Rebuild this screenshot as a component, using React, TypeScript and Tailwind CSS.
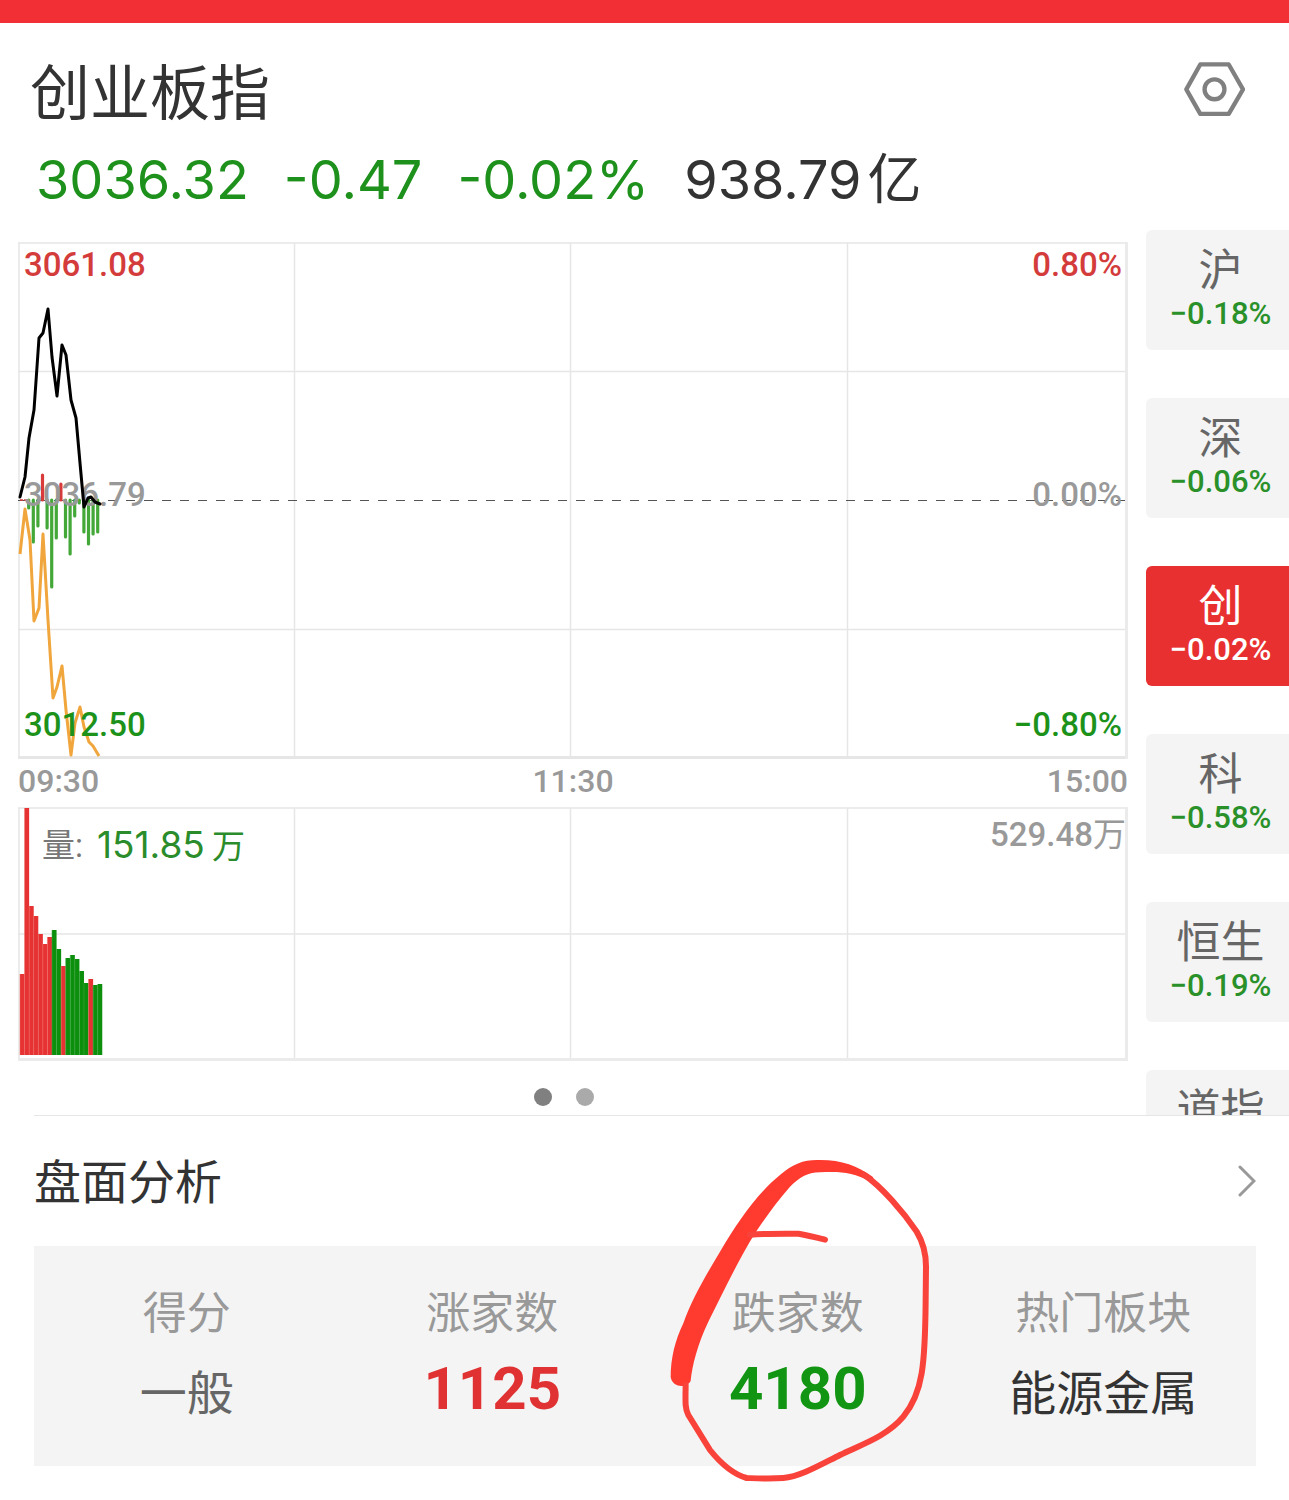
import { useState } from "react";

interface IndexItem {
  name: string;
  change?: string;
}

const indexes: IndexItem[] = [
  { name: "沪", change: "−0.18%" },
  { name: "深", change: "−0.06%" },
  { name: "创", change: "−0.02%" },
  { name: "科", change: "−0.58%" },
  { name: "恒生", change: "−0.19%" },
  { name: "道指" },
];

const stats = [
  { label: "得分", value: "一般", type: "text", color: "text-[#666666]" },
  { label: "涨家数", value: "1125", type: "number", color: "text-[#e03232]" },
  { label: "跌家数", value: "4180", type: "number", color: "text-[#129512]", marked: true },
  { label: "热门板块", value: "能源金属", type: "text", color: "text-[#333333]" },
];

const pricePoints =
  "2,256 7,236 11,197 16,169 21,97 25,92 30,68 34,116 39,155 44,104 48,114 53,159 58,177 62,222 66,266 70,257 73,256 77,261 82,263";

const averagePoints =
  "2,313 7,268 12,299 16,380 21,367 25,293 30,379 35,457 39,446 44,425 48,469 53,514 57,482 62,466 66,486 71,501 75,505 81,515";

// signed length of each minute's bar around the zero line
const momentum = [-8, -42, -26, 25, -28, -87, -38, 16, -37, -54, -16, -3, -32, -44, -34, -32];

const volumes = [
  { h: 81, up: true },
  { h: 247, up: true },
  { h: 149, up: true },
  { h: 139, up: true },
  { h: 121, up: true },
  { h: 111, up: true },
  { h: 118, up: true },
  { h: 125, up: false },
  { h: 106, up: false },
  { h: 89, up: true },
  { h: 97, up: false },
  { h: 100, up: false },
  { h: 96, up: false },
  { h: 84, up: false },
  { h: 72, up: false },
  { h: 76, up: true },
  { h: 70, up: false },
  { h: 71, up: false },
];

const chartFont = "font-['Roboto','Noto_Sans_CJK_SC',sans-serif]";

function PriceChart() {
  return (
    <svg viewBox="0 0 1110 518" className={`block h-auto w-full ${chartFont}`} role="img" aria-label="分时图">
      <g stroke="#e6e6e6" fill="none">
        <path d="M0 2H1110M1 2V517M276.500 2V516M552.500 2V516M829.500 2V516M0 130.500H1108M0 388.500H1108" strokeWidth="1.500" />
        <path d="M0 516.500H1110" strokeWidth="3" />
        <path d="M1108.500 2V518" strokeWidth="3" stroke="#ebebeb" />
      </g>
      <path d="M0 259.500H1108" stroke="#555" strokeWidth="1" strokeDasharray="9 9" />
      <path d="M2 259H9" stroke="#d93a3a" strokeWidth="1.500" strokeDasharray="3 1" />
      {momentum.map((v, i) => (
        <line
          key={i}
          x1={10.7 + i * 4.6}
          x2={10.7 + i * 4.6}
          y1={259}
          y2={259 - v}
          stroke={v > 0 ? "#d93a3a" : "#43a838"}
          strokeWidth="3.200"
          strokeLinecap="round"
        />
      ))}
      <polyline points={averagePoints} fill="none" stroke="#f0a63c" strokeWidth="3" strokeLinejoin="round" />
      <g fontSize="33" fontWeight="500">
        <text x="6" y="35" fill="#d43c3c">3061.08</text>
        <text x="6" y="265" fill="#999">3036.79</text>
        <text x="6" y="495" fill="#1d921b">3012.50</text>
        <g textAnchor="end">
          <text x="1104" y="35" fill="#d43c3c">0.80%</text>
          <text x="1104" y="265" fill="#999">0.00%</text>
          <text x="1104" y="495" fill="#1d921b">−0.80%</text>
        </g>
      </g>
      <polyline points={pricePoints} fill="none" stroke="#000" strokeWidth="3" strokeLinejoin="round" strokeLinecap="round" />
    </svg>
  );
}

function VolumeChart() {
  return (
    <svg viewBox="0 0 1110 254" className={`block h-auto w-full ${chartFont}`} role="img" aria-label="成交量">
      <g stroke="#e6e6e6" fill="none">
        <path d="M0 1H1110M1 1V253M276.500 1V252M552.500 1V252M829.500 1V252M0 127H1108" strokeWidth="1.500" />
        <path d="M0 252.500H1110M1108.500 1V254" strokeWidth="3" stroke="#ebebeb" />
      </g>
      {volumes.map((v, i) => (
        <g key={i}>
          <rect x={2 + i * 4.57} y={248 - v.h} width="4.570" height={v.h} fill={v.up ? "#e63232" : "#0c8f0c"} />
          <path d={`M${2 + i * 4.57} ${248 - v.h}V248`} stroke={v.up ? "#ef6a60" : "#45a845"} strokeWidth="0.500" />
        </g>
      ))}
      <text x="24" y="50" fontSize="33" fill="#777">量:</text>
      <g fill="#2a8c2a" className="font-['Inter','Noto_Sans_CJK_SC',sans-serif]">
        <text x="79" y="51" fontSize="37">151.85</text>
        <text x="194" y="51" fontSize="33">万</text>
      </g>
      <text x="1108" y="39" fontSize="33" fill="#999" textAnchor="end">
        <tspan fontWeight="500">529.48</tspan>万
      </text>
    </svg>
  );
}

function HandCircle() {
  return (
    <svg viewBox="0 0 960 1050" className="pointer-events-none absolute -top-[140px] -left-[5px] h-[350px] w-[320px]" aria-hidden="true">
      <path
        fill="#ff3b30"
        d="M92 712C92 655 105 602 130 550C155 478 200 402 240 335C295 242 352 160 420 105C458 72 490 60 530 60C600 58 650 75 700 112L690 125C640 94 590 94 540 97C500 98 480 112 450 140C410 185 375 235 345 280C290 370 245 465 205 545C172 615 157 675 152 722C145 742 100 748 92 712Z"
      />
      <g fill="none" stroke="#f9423a" strokeWidth="18" strokeLinecap="round" strokeLinejoin="round">
        <path d="M672 104C725 140 790 215 830 275C850 308 858 340 858 380L857 480C856 600 850 670 845 700C835 760 815 800 790 830C740 890 660 915 600 945C540 975 480 1010 430 1014C390 1017 350 1015 320 1014C270 1000 230 955 210 930L145 825C135 805 136 790 137 735" />
        <path d="M330 284C380 280 430 281 475 281C500 284 530 294 555 299" />
      </g>
    </svg>
  );
}

export default function App() {
  const [active, setActive] = useState(2);

  return (
    <div className="min-h-screen overflow-hidden bg-white font-['Noto_Sans_CJK_SC',sans-serif] text-[#333333]">
      <div className="h-[23px] bg-[#f22f35]" />

      <header className="px-[30px] pt-[30px] pb-4">
        <div className="flex items-center justify-between pr-[14px]">
          <h1 className="text-[60px] leading-[72px]">创业板指</h1>
          <button type="button" aria-label="设置">
            <svg viewBox="0 0 184 162" className="h-[54px] w-[61px]" fill="none" stroke="#808080" strokeWidth="13" strokeLinejoin="round">
              <path d="M49 7H135L178 82L135 156H49L7 82Z" />
              <circle cx="92" cy="82" r="30" />
            </svg>
          </button>
        </div>
        <div className="mt-[21px] flex h-[68px] items-baseline gap-[35px] pl-[6px] font-['Inter','Noto_Sans_CJK_SC',sans-serif] text-[54px] leading-[68px] text-[#1d911b]">
          <span>3036.32</span>
          <span>-0.47</span>
          <span>-0.02%</span>
          <span className="flex items-baseline gap-[6px] text-[#333333]">
            938.79<span>亿</span>
          </span>
        </div>
      </header>

      <main>
        <div className="flex">
          <section className="min-w-0 flex-1 px-[18px] pt-[11px]">
            <PriceChart />
            <div className="grid h-[48px] grid-cols-3 font-['Roboto',sans-serif] text-[32px] leading-[44px] font-medium text-[#999999]">
              <span>09:30</span>
              <span className="text-center">11:30</span>
              <span className="text-right">15:00</span>
            </div>
            <VolumeChart />
            <div className="flex h-[54px] justify-center gap-6 pt-[27px] pr-[18px]">
              <span className="size-[18px] rounded-full bg-[#808080]" />
              <span className="size-[18px] rounded-full bg-[#aaaaaa]" />
            </div>
          </section>

          <nav className="flex w-[143px] flex-col gap-12 overflow-hidden contain-size">
            {indexes.map((item, i) => (
              <button
                key={item.name}
                type="button"
                onClick={() => setActive(i)}
                className={`flex h-[120px] shrink-0 flex-col items-center rounded-l-md pt-[14px] pl-[6px] ${
                  i === active ? "bg-[#e83030] text-white" : "bg-[#f4f4f4] text-[#666666]"
                }`}
              >
                <span className="text-[44px] leading-[46px]">{item.name}</span>
                {item.change && (
                  <span
                    className={`font-['Roboto',sans-serif] text-[31px] leading-[48px] font-medium ${
                      i === active ? "text-white" : "text-[#2a912a]"
                    }`}
                  >
                    {item.change}
                  </span>
                )}
              </button>
            ))}
          </nav>
        </div>

        <section className="ml-[34px] border-t border-[#e6e6e6] pr-[33px]">
          <a href="#analysis" className="flex h-[130px] items-center justify-between">
            <h2 className="pb-1 text-[47px] leading-[60px]">盘面分析</h2>
            <svg viewBox="0 0 18 32" className="h-[32px] w-[18px]" fill="none" stroke="#999" strokeWidth="3" strokeLinecap="round">
              <path d="M2 2L16 16L2 30" />
            </svg>
          </a>
          <dl id="analysis" className="grid h-[220px] grid-cols-4 bg-[#f4f4f4] pt-[34px] text-center">
            {stats.map((s) => (
              <div key={s.label} className="relative">
                <dt className="text-[44px] leading-[60px] text-[#999999]">{s.label}</dt>
                <dd
                  className={`${s.color} ${
                    s.type === "number"
                      ? "mt-4 font-['Roboto',sans-serif] text-[60px] leading-[66px] font-bold"
                      : "mt-4 text-[47px] leading-[68px]"
                  }`}
                >
                  {s.value}
                </dd>
                {s.marked && <HandCircle />}
              </div>
            ))}
          </dl>
        </section>
      </main>
    </div>
  );
}
